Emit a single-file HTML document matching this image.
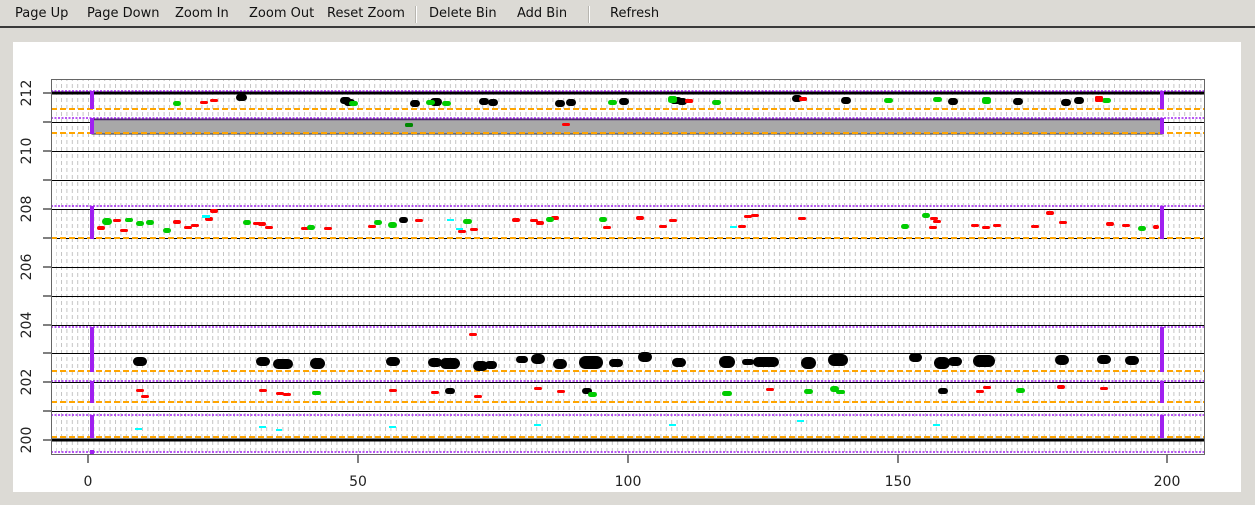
<!DOCTYPE html>
<html><head><meta charset="utf-8"><style>
html,body{margin:0;padding:0;width:1255px;height:505px;overflow:hidden;background:#dcdad5;font-family:"DejaVu Sans","Liberation Sans",sans-serif}
.tb{position:absolute;left:0;top:0;width:1255px;height:28px;background:#dcdad5;border-bottom:2px solid #3a3a3a;box-sizing:border-box}
.tb span{position:absolute;top:6px;font-size:13px;color:#111}
.sep{position:absolute;top:6px;width:1px;height:17px;background:#b8b6b0;border-right:1px solid #fff}
svg{position:absolute;left:0;top:0}
</style></head><body>
<div class="tb">
<span style="left:15px">Page Up</span>
<span style="left:87px">Page Down</span>
<span style="left:175px">Zoom In</span>
<span style="left:249px">Zoom Out</span>
<span style="left:327px">Reset Zoom</span>
<div class="sep" style="left:415px"></div>
<span style="left:429px">Delete Bin</span>
<span style="left:517px">Add Bin</span>
<div class="sep" style="left:588px"></div>
<span style="left:610px">Refresh</span>
</div>
<svg width="1255" height="505" viewBox="0 0 1255 505" font-family="DejaVu Sans, Liberation Sans, sans-serif">
<defs>
<pattern id="vg" x="88" y="0" width="5.4" height="7" patternUnits="userSpaceOnUse">
<rect x="0" y="0" width="1" height="4" fill="#c4c4c4"/>
</pattern>
<clipPath id="pc"><rect x="51" y="79" width="1153" height="375"/></clipPath>
</defs>
<rect x="13" y="42" width="1228" height="450" fill="#fff"/>
<g clip-path="url(#pc)">
<rect x="56" y="79" width="1148" height="375" fill="url(#vg)"/>
<g stroke="#000" stroke-width="1">
<line x1="51" y1="122.5" x2="1204" y2="122.5"/><line x1="51" y1="151.5" x2="1204" y2="151.5"/>
<line x1="51" y1="180.5" x2="1204" y2="180.5"/><line x1="51" y1="209.5" x2="1204" y2="209.5"/>
<line x1="51" y1="238.5" x2="1204" y2="238.5"/><line x1="51" y1="267.5" x2="1204" y2="267.5"/>
<line x1="51" y1="296.5" x2="1204" y2="296.5"/><line x1="51" y1="325.5" x2="1204" y2="325.5"/>
<line x1="51" y1="353.5" x2="1204" y2="353.5"/><line x1="51" y1="382.5" x2="1204" y2="382.5"/>
<line x1="51" y1="411.5" x2="1204" y2="411.5"/>
</g>
<line x1="51" y1="93" x2="1204" y2="93" stroke="#000" stroke-width="3"/>
<line x1="51" y1="440" x2="1204" y2="440" stroke="#000" stroke-width="3"/>
<rect x="92" y="119" width="1070" height="15" fill="#a8a8a8" stroke="#333" stroke-width="1"/>
<line x1="92" y1="119.5" x2="1162" y2="119.5" stroke="#4b2a6b" stroke-width="1.5"/>
<g stroke="#a020f0" stroke-width="1.5" stroke-dasharray="2,1.5">
<line x1="51" y1="91" x2="1204" y2="91"/><line x1="51" y1="118" x2="1204" y2="118"/>
<line x1="51" y1="206" x2="1204" y2="206"/><line x1="51" y1="327" x2="1204" y2="327"/>
<line x1="51" y1="381" x2="1204" y2="381"/><line x1="51" y1="415" x2="1204" y2="415"/>
<line x1="51" y1="452" x2="1204" y2="452"/>
</g>
<g stroke="#ffa500" stroke-width="2" stroke-dasharray="6,3">
<line x1="51" y1="109" x2="1204" y2="109"/><line x1="51" y1="133" x2="1204" y2="133"/>
<line x1="51" y1="238" x2="1204" y2="238"/><line x1="51" y1="371" x2="1204" y2="371"/>
<line x1="51" y1="402" x2="1204" y2="402"/><line x1="51" y1="437" x2="1204" y2="437"/>
</g>
<g stroke="#a020f0" stroke-width="4">
<line x1="92" y1="91" x2="92" y2="109"/><line x1="1162" y1="91" x2="1162" y2="109"/>
<line x1="92" y1="118" x2="92" y2="134"/><line x1="1162" y1="118" x2="1162" y2="134"/>
<line x1="92" y1="206" x2="92" y2="239"/><line x1="1162" y1="206" x2="1162" y2="239"/>
<line x1="92" y1="327" x2="92" y2="372"/><line x1="1162" y1="327" x2="1162" y2="372"/>
<line x1="92" y1="381" x2="92" y2="403"/><line x1="1162" y1="381" x2="1162" y2="403"/>
<line x1="92" y1="415" x2="92" y2="438"/><line x1="1162" y1="415" x2="1162" y2="438"/>
<line x1="92" y1="450" x2="92" y2="454"/>
</g>
<g fill="#000">
<rect x="236" y="94" width="11" height="7" rx="3.5"/><rect x="340" y="97" width="11" height="7" rx="3.5"/><rect x="344" y="99" width="11" height="7" rx="3.5"/>
<rect x="410" y="100" width="10" height="7" rx="3.5"/><rect x="430" y="98" width="12" height="8" rx="4"/><rect x="479" y="98" width="10" height="7" rx="3.5"/>
<rect x="488" y="99" width="10" height="7" rx="3.5"/><rect x="555" y="100" width="10" height="7" rx="3.5"/><rect x="566" y="99" width="10" height="7" rx="3.5"/>
<rect x="619" y="98" width="10" height="7" rx="3.5"/><rect x="670" y="97" width="12" height="7" rx="3.5"/><rect x="677" y="98" width="10" height="7" rx="3.5"/>
<rect x="792" y="95" width="10" height="7" rx="3.5"/><rect x="841" y="97" width="10" height="7" rx="3.5"/><rect x="948" y="98" width="10" height="7" rx="3.5"/>
<rect x="1013" y="98" width="10" height="7" rx="3.5"/><rect x="1061" y="99" width="10" height="7" rx="3.5"/><rect x="1074" y="97" width="10" height="7" rx="3.5"/>
</g>
<g fill="#00cc00">
<rect x="173" y="101" width="8" height="5" rx="2.5"/><rect x="349" y="101" width="9" height="5" rx="2.5"/><rect x="426" y="100" width="9" height="5" rx="2.5"/>
<rect x="442" y="101" width="9" height="5" rx="2.5"/><rect x="608" y="100" width="9" height="5" rx="2.5"/><rect x="668" y="96" width="9" height="7" rx="2.5"/>
<rect x="712" y="100" width="9" height="5" rx="2.5"/><rect x="884" y="98" width="9" height="5" rx="2.5"/><rect x="933" y="97" width="9" height="5" rx="2.5"/>
<rect x="982" y="97" width="9" height="7" rx="2.5"/><rect x="1102" y="98" width="9" height="5" rx="2.5"/>
</g>
<g fill="#ff0000">
<rect x="200" y="101" width="8" height="3" rx="1.5"/><rect x="210" y="99" width="8" height="3" rx="1.5"/><rect x="685" y="99" width="8" height="4" rx="1.5"/>
<rect x="799" y="97" width="8" height="4" rx="1.5"/><rect x="1095" y="96" width="8" height="6" rx="1.5"/><rect x="562" y="123" width="8" height="3" rx="1.5"/>
</g>
<rect x="405" y="123" width="8" height="4" rx="1.5" fill="#008800"/>
<g fill="#ff0000">
<rect x="97" y="226" width="8" height="4" rx="2"/><rect x="113" y="219" width="8" height="3" rx="1.5"/><rect x="120" y="229" width="8" height="3" rx="1.5"/>
<rect x="173" y="220" width="8" height="4" rx="2"/><rect x="184" y="226" width="8" height="3" rx="1.5"/><rect x="191" y="224" width="8" height="3" rx="1.5"/>
<rect x="205" y="217" width="8" height="4" rx="2"/><rect x="210" y="209" width="8" height="4" rx="2"/><rect x="253" y="222" width="8" height="3" rx="1.5"/>
<rect x="258" y="222" width="8" height="4" rx="2"/><rect x="265" y="226" width="8" height="3" rx="1.5"/><rect x="301" y="227" width="8" height="3" rx="1.5"/>
<rect x="324" y="227" width="8" height="3" rx="1.5"/><rect x="368" y="225" width="8" height="3" rx="1.5"/><rect x="415" y="219" width="8" height="3" rx="1.5"/>
<rect x="458" y="230" width="8" height="3" rx="1.5"/><rect x="470" y="228" width="8" height="3" rx="1.5"/><rect x="512" y="218" width="8" height="4" rx="2"/>
<rect x="530" y="219" width="8" height="3" rx="1.5"/><rect x="536" y="221" width="8" height="4" rx="2"/><rect x="551" y="216" width="8" height="4" rx="2"/>
<rect x="603" y="226" width="8" height="3" rx="1.5"/><rect x="636" y="216" width="8" height="4" rx="2"/><rect x="659" y="225" width="8" height="3" rx="1.5"/>
<rect x="669" y="219" width="8" height="3" rx="1.5"/><rect x="738" y="225" width="8" height="3" rx="1.5"/><rect x="744" y="215" width="8" height="3" rx="1.5"/>
<rect x="751" y="214" width="8" height="3" rx="1.5"/><rect x="798" y="217" width="8" height="3" rx="1.5"/><rect x="929" y="226" width="8" height="3" rx="1.5"/>
<rect x="930" y="217" width="8" height="3" rx="1.5"/><rect x="933" y="220" width="8" height="3" rx="1.5"/><rect x="971" y="224" width="8" height="3" rx="1.5"/>
<rect x="982" y="226" width="8" height="3" rx="1.5"/><rect x="993" y="224" width="8" height="3" rx="1.5"/><rect x="1031" y="225" width="8" height="3" rx="1.5"/>
<rect x="1046" y="211" width="8" height="4" rx="2"/><rect x="1059" y="221" width="8" height="3" rx="1.5"/><rect x="1106" y="222" width="8" height="4" rx="2"/>
<rect x="1122" y="224" width="8" height="3" rx="1.5"/><rect x="1153" y="225" width="6" height="4" rx="2"/><rect x="469" y="333" width="8" height="3" rx="1.5"/>
</g>
<g fill="#00cc00">
<rect x="102" y="218" width="10" height="7" rx="3.5"/><rect x="125" y="218" width="8" height="4" rx="2"/><rect x="136" y="221" width="8" height="5" rx="2.5"/>
<rect x="146" y="220" width="8" height="5" rx="2.5"/><rect x="163" y="228" width="8" height="5" rx="2.5"/><rect x="243" y="220" width="8" height="5" rx="2.5"/>
<rect x="307" y="225" width="8" height="5" rx="2.5"/><rect x="374" y="220" width="8" height="5" rx="2.5"/><rect x="388" y="222" width="9" height="6" rx="3"/>
<rect x="463" y="219" width="9" height="5" rx="2.5"/><rect x="546" y="217" width="8" height="5" rx="2.5"/><rect x="599" y="217" width="8" height="5" rx="2.5"/>
<rect x="901" y="224" width="8" height="5" rx="2.5"/><rect x="922" y="213" width="8" height="5" rx="2.5"/><rect x="1138" y="226" width="8" height="5" rx="2.5"/>
</g>
<rect x="399" y="217" width="9" height="6" rx="3" fill="#000"/>
<g fill="#00ffff">
<rect x="202" y="215" width="8" height="3"/><rect x="447" y="219" width="7" height="2"/><rect x="456" y="228" width="7" height="2"/><rect x="730" y="226" width="7" height="2"/>
<rect x="135" y="428" width="7" height="2"/><rect x="259" y="426" width="7" height="2"/><rect x="276" y="429" width="6" height="2"/><rect x="389" y="426" width="7" height="2"/>
<rect x="534" y="424" width="7" height="2"/><rect x="669" y="424" width="7" height="2"/><rect x="797" y="420" width="7" height="2"/><rect x="933" y="424" width="7" height="2"/>
</g>
<g fill="#000">
<rect x="133" y="357" width="14" height="9" rx="4.5"/><rect x="256" y="357" width="14" height="9" rx="4.5"/><rect x="273" y="359" width="20" height="10" rx="5"/>
<rect x="310" y="358" width="15" height="11" rx="5.5"/><rect x="386" y="357" width="14" height="9" rx="4.5"/><rect x="428" y="358" width="14" height="9" rx="4.5"/>
<rect x="440" y="358" width="20" height="11" rx="5.5"/><rect x="473" y="361" width="15" height="10" rx="5"/><rect x="485" y="361" width="12" height="8" rx="4"/>
<rect x="516" y="356" width="12" height="7" rx="3.5"/><rect x="531" y="354" width="14" height="10" rx="5"/><rect x="553" y="359" width="14" height="10" rx="5"/>
<rect x="579" y="356" width="24" height="13" rx="6.5"/><rect x="609" y="359" width="14" height="8" rx="4"/><rect x="638" y="352" width="14" height="10" rx="5"/>
<rect x="672" y="358" width="14" height="9" rx="4.5"/><rect x="719" y="356" width="16" height="12" rx="6"/><rect x="742" y="359" width="12" height="6" rx="3"/>
<rect x="753" y="357" width="26" height="10" rx="5"/><rect x="801" y="357" width="15" height="12" rx="6"/><rect x="828" y="354" width="20" height="12" rx="6"/>
<rect x="909" y="353" width="13" height="9" rx="4.5"/><rect x="934" y="357" width="16" height="12" rx="6"/><rect x="948" y="357" width="14" height="9" rx="4.5"/>
<rect x="973" y="355" width="22" height="12" rx="6"/><rect x="1055" y="355" width="14" height="10" rx="5"/><rect x="1097" y="355" width="14" height="9" rx="4.5"/>
<rect x="1125" y="356" width="14" height="9" rx="4.5"/>
<rect x="445" y="388" width="10" height="6" rx="3"/><rect x="582" y="388" width="10" height="6" rx="3"/><rect x="938" y="388" width="10" height="6" rx="3"/>
</g>
<g fill="#ff0000">
<rect x="136" y="389" width="8" height="3" rx="1.5"/><rect x="141" y="395" width="8" height="3" rx="1.5"/><rect x="259" y="389" width="8" height="3" rx="1.5"/>
<rect x="276" y="392" width="8" height="3" rx="1.5"/><rect x="283" y="393" width="8" height="3" rx="1.5"/><rect x="389" y="389" width="8" height="3" rx="1.5"/>
<rect x="431" y="391" width="8" height="3" rx="1.5"/><rect x="474" y="395" width="8" height="3" rx="1.5"/><rect x="534" y="387" width="8" height="3" rx="1.5"/>
<rect x="557" y="390" width="8" height="3" rx="1.5"/><rect x="766" y="388" width="8" height="3" rx="1.5"/><rect x="976" y="390" width="8" height="3" rx="1.5"/>
<rect x="983" y="386" width="8" height="3" rx="1.5"/><rect x="1057" y="385" width="8" height="4" rx="2"/><rect x="1100" y="387" width="8" height="3" rx="1.5"/>
</g>
<g fill="#00cc00">
<rect x="312" y="391" width="9" height="4" rx="2"/><rect x="588" y="392" width="9" height="5" rx="2.5"/><rect x="722" y="391" width="10" height="5" rx="2.5"/>
<rect x="804" y="389" width="9" height="5" rx="2.5"/><rect x="830" y="386" width="9" height="6" rx="3"/><rect x="836" y="390" width="9" height="4" rx="2"/>
<rect x="1016" y="388" width="9" height="5" rx="2.5"/>
</g>
</g>
<rect x="51.5" y="79.5" width="1153" height="375" fill="none" stroke="#666" stroke-width="1"/>
<g stroke="#000" stroke-width="1">
<line x1="43" y1="93" x2="51" y2="93"/><line x1="43" y1="122" x2="51" y2="122"/><line x1="43" y1="151" x2="51" y2="151"/><line x1="43" y1="180" x2="51" y2="180"/>
<line x1="43" y1="209" x2="51" y2="209"/><line x1="43" y1="238" x2="51" y2="238"/><line x1="43" y1="267" x2="51" y2="267"/><line x1="43" y1="296" x2="51" y2="296"/>
<line x1="43" y1="325" x2="51" y2="325"/><line x1="43" y1="353" x2="51" y2="353"/><line x1="43" y1="382" x2="51" y2="382"/><line x1="43" y1="411" x2="51" y2="411"/><line x1="43" y1="440" x2="51" y2="440"/>
<line x1="88" y1="455" x2="88" y2="463"/><line x1="358" y1="455" x2="358" y2="463"/><line x1="628" y1="455" x2="628" y2="463"/><line x1="898" y1="455" x2="898" y2="463"/><line x1="1167" y1="455" x2="1167" y2="463"/>
</g>
<g font-size="14" fill="#222" text-anchor="middle">
<text transform="translate(31,93) rotate(-90)">212</text>
<text transform="translate(31,151) rotate(-90)">210</text>
<text transform="translate(31,209) rotate(-90)">208</text>
<text transform="translate(31,267) rotate(-90)">206</text>
<text transform="translate(31,325) rotate(-90)">204</text>
<text transform="translate(31,382) rotate(-90)">202</text>
<text transform="translate(31,440) rotate(-90)">200</text>
<text x="88" y="486">0</text><text x="358" y="486">50</text><text x="628" y="486">100</text><text x="898" y="486">150</text><text x="1167" y="486">200</text>
</g>
</svg>
</body></html>
